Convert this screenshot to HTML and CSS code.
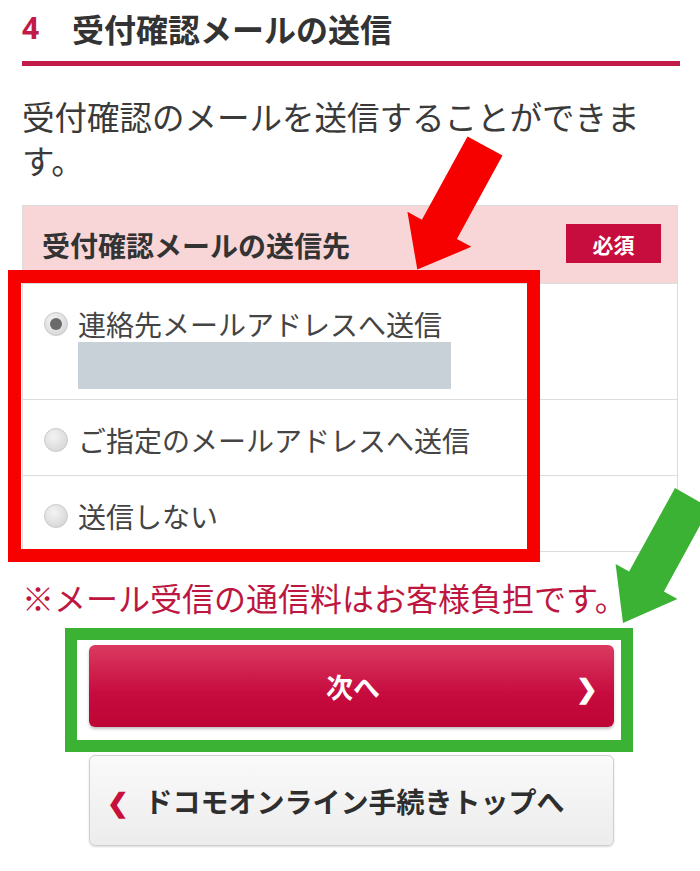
FILE: index.html
```html
<!DOCTYPE html>
<html lang="ja">
<head>
<meta charset="utf-8">
<title>受付確認メールの送信</title>
<link rel="stylesheet" href="styles.css">
</head>
<body>
<main class="page">
  <h2 class="step-title"><span class="step-num">4</span><span class="step-text">受付確認メールの送信</span></h2>
  <p class="lead">受付確認のメールを送信することができます。</p>

  <section class="form-table">
    <div class="form-head">
      <span class="form-label">受付確認メールの送信先</span>
      <span class="badge">必須</span>
    </div>
    <div class="option option-first">
      <label class="opt-line"><span class="radio radio-on"></span><span class="opt-text">連絡先メールアドレスへ送信</span></label>
      <div class="masked"></div>
    </div>
    <div class="option">
      <label class="opt-line"><span class="radio"></span><span class="opt-text">ご指定のメールアドレスへ送信</span></label>
    </div>
    <div class="option">
      <label class="opt-line"><span class="radio"></span><span class="opt-text">送信しない</span></label>
    </div>
  </section>

  <p class="notice">※メール受信の通信料はお客様負担です。</p>

  <div class="actions">
    <button class="btn btn-primary"><span class="btn-label">次へ</span><span class="chev chev-right">&#x276F;</span></button>
    <button class="btn btn-secondary"><span class="chev chev-left">&#x276E;</span><span class="btn-label">ドコモオンライン手続きトップへ</span></button>
  </div>
</main>

<div class="mark mark-red"></div>
<div class="mark mark-green"></div>
<svg class="arrows" width="700" height="871" viewBox="0 0 700 871" aria-hidden="true">
  <polygon fill="#f70000" points="467.5,136.4 502.5,155.6 456.9,238.9 471.4,246.8 417.3,269.6 407.4,211.8 421.9,219.7"/>
  <polygon fill="#3bb233" points="675,488 709.8,507.7 663.9,591.4 677.4,599 623,623 615.6,564 629.1,571.6"/>
</svg>
</body>
</html>
```
FILE: styles.css
```css
* { box-sizing: border-box; }

html, body {
  margin: 0;
  padding: 0;
  background: #ffffff;
}

body {
  font-family: "Noto Sans CJK JP", "Noto Sans", sans-serif;
  color: #3a3a3a;
  width: 700px;
  height: 871px;
  overflow: hidden;
  position: relative;
}

.page {
  padding: 0 20px 0 22px;
}

.step-title {
  margin: 0;
  padding: 8px 0 13px;
  font-size: 32px;
  line-height: 40px;
  font-weight: 700;
  color: #333;
  border-bottom: 5px solid #c21a48;
  display: flex;
  align-items: center;
}

.step-num {
  color: #c21a48;
  font-family: "Noto Sans", sans-serif;
  font-size: 30px;
  width: 50px;
}

.lead {
  margin: 28px 0 0;
  font-size: 32.5px;
  line-height: 44px;
  color: #3a3a3a;
  padding-right: 16px;
}

.form-table {
  margin-top: 23px;
  width: 656px;
  border: 1px solid #dcdcdc;
}

.form-head {
  height: 77px;
  background: #f8d6d8;
  display: flex;
  align-items: center;
  justify-content: space-between;
  padding: 0 16px 0 19px;
}

.form-label {
  font-size: 28px;
  font-weight: 700;
  color: #333;
}

.badge {
  width: 95px;
  height: 39px;
  background: #c70d3d;
  color: #fff;
  font-weight: 700;
  font-size: 21px;
  display: flex;
  align-items: center;
  justify-content: center;
  margin-top: -2px;
}

.option {
  border-top: 1px solid #dcdcdc;
  padding: 22px 0 17px 21px;
}

.option-first {
  padding-bottom: 10px;
}

.opt-line {
  display: flex;
  align-items: center;
  height: 36px;
}

.opt-text {
  font-size: 28px;
  line-height: 36px;
  color: #444;
  margin-left: 10px;
}

.radio {
  width: 24px;
  height: 24px;
  border-radius: 50%;
  background: radial-gradient(circle at 40% 35%, #f4f4f4 0%, #dedede 60%, #cfcfcf 100%);
  border: 1px solid #c9c9c9;
  position: relative;
  flex: none;
}

.radio-on::after {
  content: "";
  position: absolute;
  left: 5px;
  top: 5px;
  width: 12px;
  height: 12px;
  border-radius: 50%;
  background: #6a6a6a;
}

.masked {
  margin-left: 34px;
  width: 373px;
  height: 47px;
  background: #c8d0d8;
}

.notice {
  margin: 25px 0 0;
  font-size: 32px;
  line-height: 40px;
  color: #bd1640;
  white-space: nowrap;
}

.actions {
  margin-top: 28px;
  display: flex;
  flex-direction: column;
  align-items: center;
  gap: 28px;
  width: 658px;
}

.btn {
  width: 525px;
  border-radius: 6px;
  font-family: "Noto Sans CJK JP", "Noto Sans", sans-serif;
  font-weight: 700;
  display: flex;
  align-items: center;
  position: relative;
  padding: 0;
  cursor: pointer;
}

.btn-primary {
  height: 82px;
  border: none;
  background: linear-gradient(#da3a60, #c60b3e 60%, #bd0535);
  color: #fff;
  font-size: 27px;
  justify-content: center;
  box-shadow: 0 2px 3px rgba(0,0,0,0.25);
}

.btn-primary .btn-label {
  margin-left: 4px;
}

.chev-right {
  position: absolute;
  right: 16px;
  top: 50%;
  transform: translateY(-50%);
  font-size: 26px;
  color: #fff;
}

.btn-secondary {
  height: 91px;
  border: 1px solid #cfcfcf;
  background: linear-gradient(#fafafa, #ececec);
  color: #2e2e2e;
  font-size: 28px;
  padding-left: 17px;
  box-shadow: 0 1px 2px rgba(0,0,0,0.15);
}

.chev-left {
  color: #c8103c;
  font-size: 26px;
  margin-right: 16px;
}

.mark {
  position: absolute;
  pointer-events: none;
}

.mark-red {
  left: 8px;
  top: 270px;
  width: 532px;
  height: 292px;
  border: 13px solid #f70000;
}

.mark-green {
  left: 65px;
  top: 628px;
  width: 568px;
  height: 124px;
  border: 12px solid #3bb233;
}

.arrows {
  position: absolute;
  left: 0;
  top: 0;
  pointer-events: none;
}
```
